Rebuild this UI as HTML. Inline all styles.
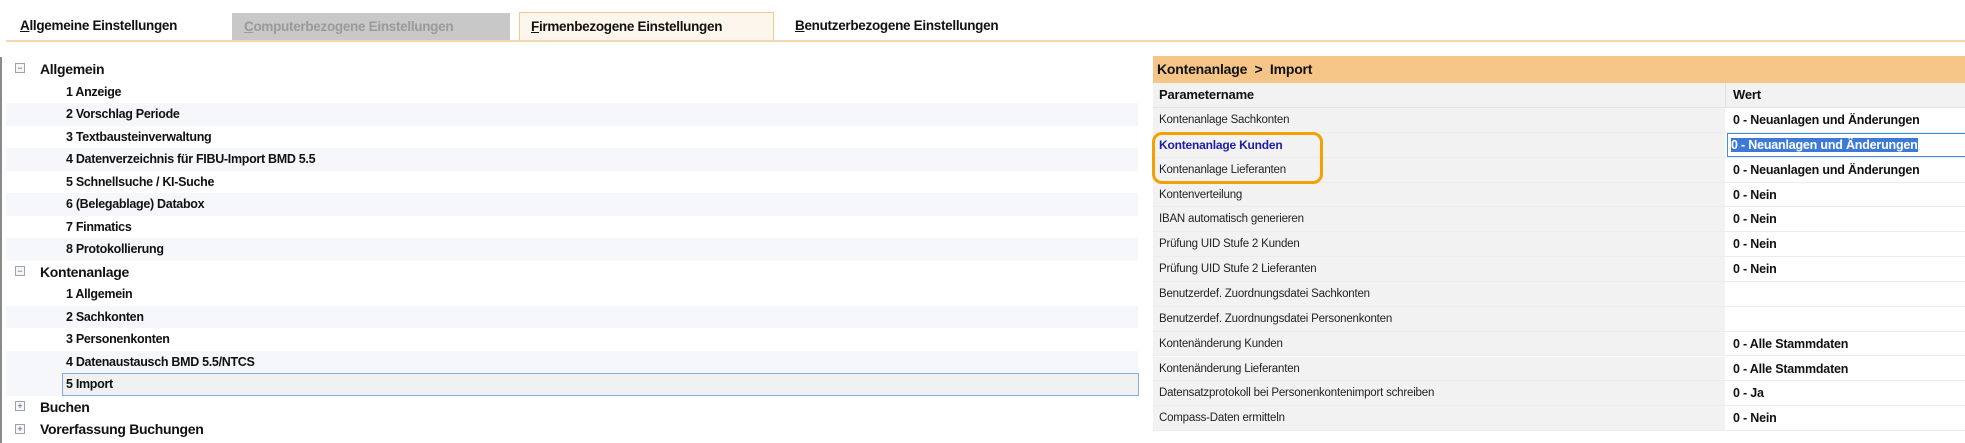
<!DOCTYPE html>
<html><head><meta charset="utf-8"><style>
*{margin:0;padding:0;box-sizing:border-box}
body{width:1965px;height:443px;background:#fff;position:relative;overflow:hidden;font-family:"Liberation Sans",sans-serif;color:#111}
.a{position:absolute;white-space:nowrap}
.tab{position:absolute;top:12px;height:29px;font-weight:bold;font-size:13.5px;line-height:28px;letter-spacing:-0.3px}
.row{position:absolute;left:6px;width:1132px;height:22.5px;line-height:22.5px}
.st{background:#f6f7fb}
.top{font-size:14px;font-weight:bold;letter-spacing:-0.3px}
.sub{font-size:12.5px;font-weight:bold;letter-spacing:-0.3px}
.ico{position:absolute;width:10px;height:10px;border:1px solid #9aa3ad;background:#f4f6f8;font-size:9px;line-height:8px;text-align:center;color:#556}
.pr{position:absolute;left:1153px;width:812px;height:24.85px;border-bottom:1px solid #ececec}
.pl{position:absolute;left:0;top:0;width:572px;height:100%;background:#f2f2f2;font-size:11.5px;line-height:24px;padding-left:6px;letter-spacing:-0.2px;color:#222}
.pv{position:absolute;left:574px;top:0;right:0;height:100%;background:#fff;font-size:12.5px;font-weight:bold;line-height:24px;padding-left:6px;letter-spacing:-0.2px}
</style></head><body>
<div class="tab" style="left:14px;width:210px;padding-left:6px"><u>A</u>llgemeine Einstellungen</div>
<div class="tab" style="left:232px;width:278px;background:#c8c8c8;color:#9a9a9a;padding-left:12px;top:13px;height:27px"><u>C</u>omputerbezogene Einstellungen</div>
<div class="tab" style="left:519px;width:255px;background:#fdf6ec;border:1px solid #f2c88e;border-bottom:none;padding-left:11px"><u>F</u>irmenbezogene Einstellungen</div>
<div class="tab" style="left:788px;width:260px;padding-left:7px"><u>B</u>enutzerbezogene Einstellungen</div>
<div class="a" style="left:6px;top:40px;width:1959px;height:2px;background:#f6d8ae"></div>
<div class="a" style="left:0;top:57px;width:2px;height:386px;background:#8a8a8a"></div>

<div class="row top" style="top:58px"><span style="position:absolute;left:34px">Allgemein</span></div>
<div class="ico" style="left:15px;top:63px">−</div>
<div class="row sub" style="top:80.5px"><span style="position:absolute;left:60px">1 Anzeige</span></div>
<div class="row sub st" style="top:103px"><span style="position:absolute;left:60px">2 Vorschlag Periode</span></div>
<div class="row sub" style="top:125.5px"><span style="position:absolute;left:60px">3 Textbausteinverwaltung</span></div>
<div class="row sub st" style="top:148px"><span style="position:absolute;left:60px">4 Datenverzeichnis für FIBU-Import BMD 5.5</span></div>
<div class="row sub" style="top:170.5px"><span style="position:absolute;left:60px">5 Schnellsuche / KI-Suche</span></div>
<div class="row sub st" style="top:193px"><span style="position:absolute;left:60px">6 (Belegablage) Databox</span></div>
<div class="row sub" style="top:215.5px"><span style="position:absolute;left:60px">7 Finmatics</span></div>
<div class="row sub st" style="top:238px"><span style="position:absolute;left:60px">8 Protokollierung</span></div>
<div class="row top" style="top:260.5px"><span style="position:absolute;left:34px">Kontenanlage</span></div>
<div class="ico" style="left:15px;top:266px">−</div>
<div class="row sub" style="top:283px"><span style="position:absolute;left:60px">1 Allgemein</span></div>
<div class="row sub st" style="top:305.5px"><span style="position:absolute;left:60px">2 Sachkonten</span></div>
<div class="row sub" style="top:328px"><span style="position:absolute;left:60px">3 Personenkonten</span></div>
<div class="row sub st" style="top:350.5px"><span style="position:absolute;left:60px">4 Datenaustausch BMD 5.5/NTCS</span></div>
<div class="row sub st" style="top:373px"></div>
<div class="a sub" style="left:62px;top:373px;width:1077px;height:22.5px;background:#f0f0f0;border:1px solid #82aee8;line-height:20px;padding-left:3px">5 Import</div>
<div class="row top" style="top:395.5px"><span style="position:absolute;left:34px">Buchen</span></div>
<div class="ico" style="left:15px;top:401px">+</div>
<div class="row top" style="top:418px"><span style="position:absolute;left:34px">Vorerfassung Buchungen</span></div>
<div class="ico" style="left:15px;top:424px">+</div>

<div class="a" style="left:1153px;top:56px;width:812px;height:27px;background:#f4c586;font-weight:bold;font-size:14px;line-height:27px;padding-left:4px;letter-spacing:-0.2px">Kontenanlage &nbsp;&gt;&nbsp; Import</div>
<div class="a" style="left:1153px;top:83px;width:812px;height:25px;background:#f2f2f2;border-bottom:1px solid #e2e2e2;font-weight:bold;font-size:13px;line-height:24px;letter-spacing:-0.2px"><span style="position:absolute;left:6px">Parametername</span><span style="position:absolute;left:572px;top:0;width:1px;height:24px;background:#e0e0e0"></span><span style="position:absolute;left:580px">Wert</span></div>

<div class="pr" style="top:108px"><div class="pl">Kontenanlage Sachkonten</div><div class="pv">0 - Neuanlagen und Änderungen</div></div>
<div class="pr" style="top:132.85px"><div class="pl" style="color:#1c1caa;font-weight:bold;font-size:12px">Kontenanlage Kunden</div><div class="pv" style="border:1px solid #3d8fe8;padding-left:3px;line-height:22px;right:-4px"><span style="background:#3d7ad8;color:#fff">0 - Neuanlagen und Änderungen</span></div></div>
<div class="pr" style="top:157.7px"><div class="pl">Kontenanlage Lieferanten</div><div class="pv">0 - Neuanlagen und Änderungen</div></div>
<div class="pr" style="top:182.55px"><div class="pl">Kontenverteilung</div><div class="pv">0 - Nein</div></div>
<div class="pr" style="top:207.4px"><div class="pl">IBAN automatisch generieren</div><div class="pv">0 - Nein</div></div>
<div class="pr" style="top:232.25px"><div class="pl">Prüfung UID Stufe 2 Kunden</div><div class="pv">0 - Nein</div></div>
<div class="pr" style="top:257.1px"><div class="pl">Prüfung UID Stufe 2 Lieferanten</div><div class="pv">0 - Nein</div></div>
<div class="pr" style="top:281.95px"><div class="pl">Benutzerdef. Zuordnungsdatei Sachkonten</div><div class="pv"></div></div>
<div class="pr" style="top:306.8px"><div class="pl">Benutzerdef. Zuordnungsdatei Personenkonten</div><div class="pv"></div></div>
<div class="pr" style="top:331.65px"><div class="pl">Kontenänderung Kunden</div><div class="pv">0 - Alle Stammdaten</div></div>
<div class="pr" style="top:356.5px"><div class="pl">Kontenänderung Lieferanten</div><div class="pv">0 - Alle Stammdaten</div></div>
<div class="pr" style="top:381.35px"><div class="pl">Datensatzprotokoll bei Personenkontenimport schreiben</div><div class="pv">0 - Ja</div></div>
<div class="pr" style="top:406.2px"><div class="pl">Compass-Daten ermitteln</div><div class="pv">0 - Nein</div></div>

<div class="a" style="left:1152px;top:132px;width:171px;height:52px;border:3px solid #f5a000;border-radius:10px"></div>
</body></html>
